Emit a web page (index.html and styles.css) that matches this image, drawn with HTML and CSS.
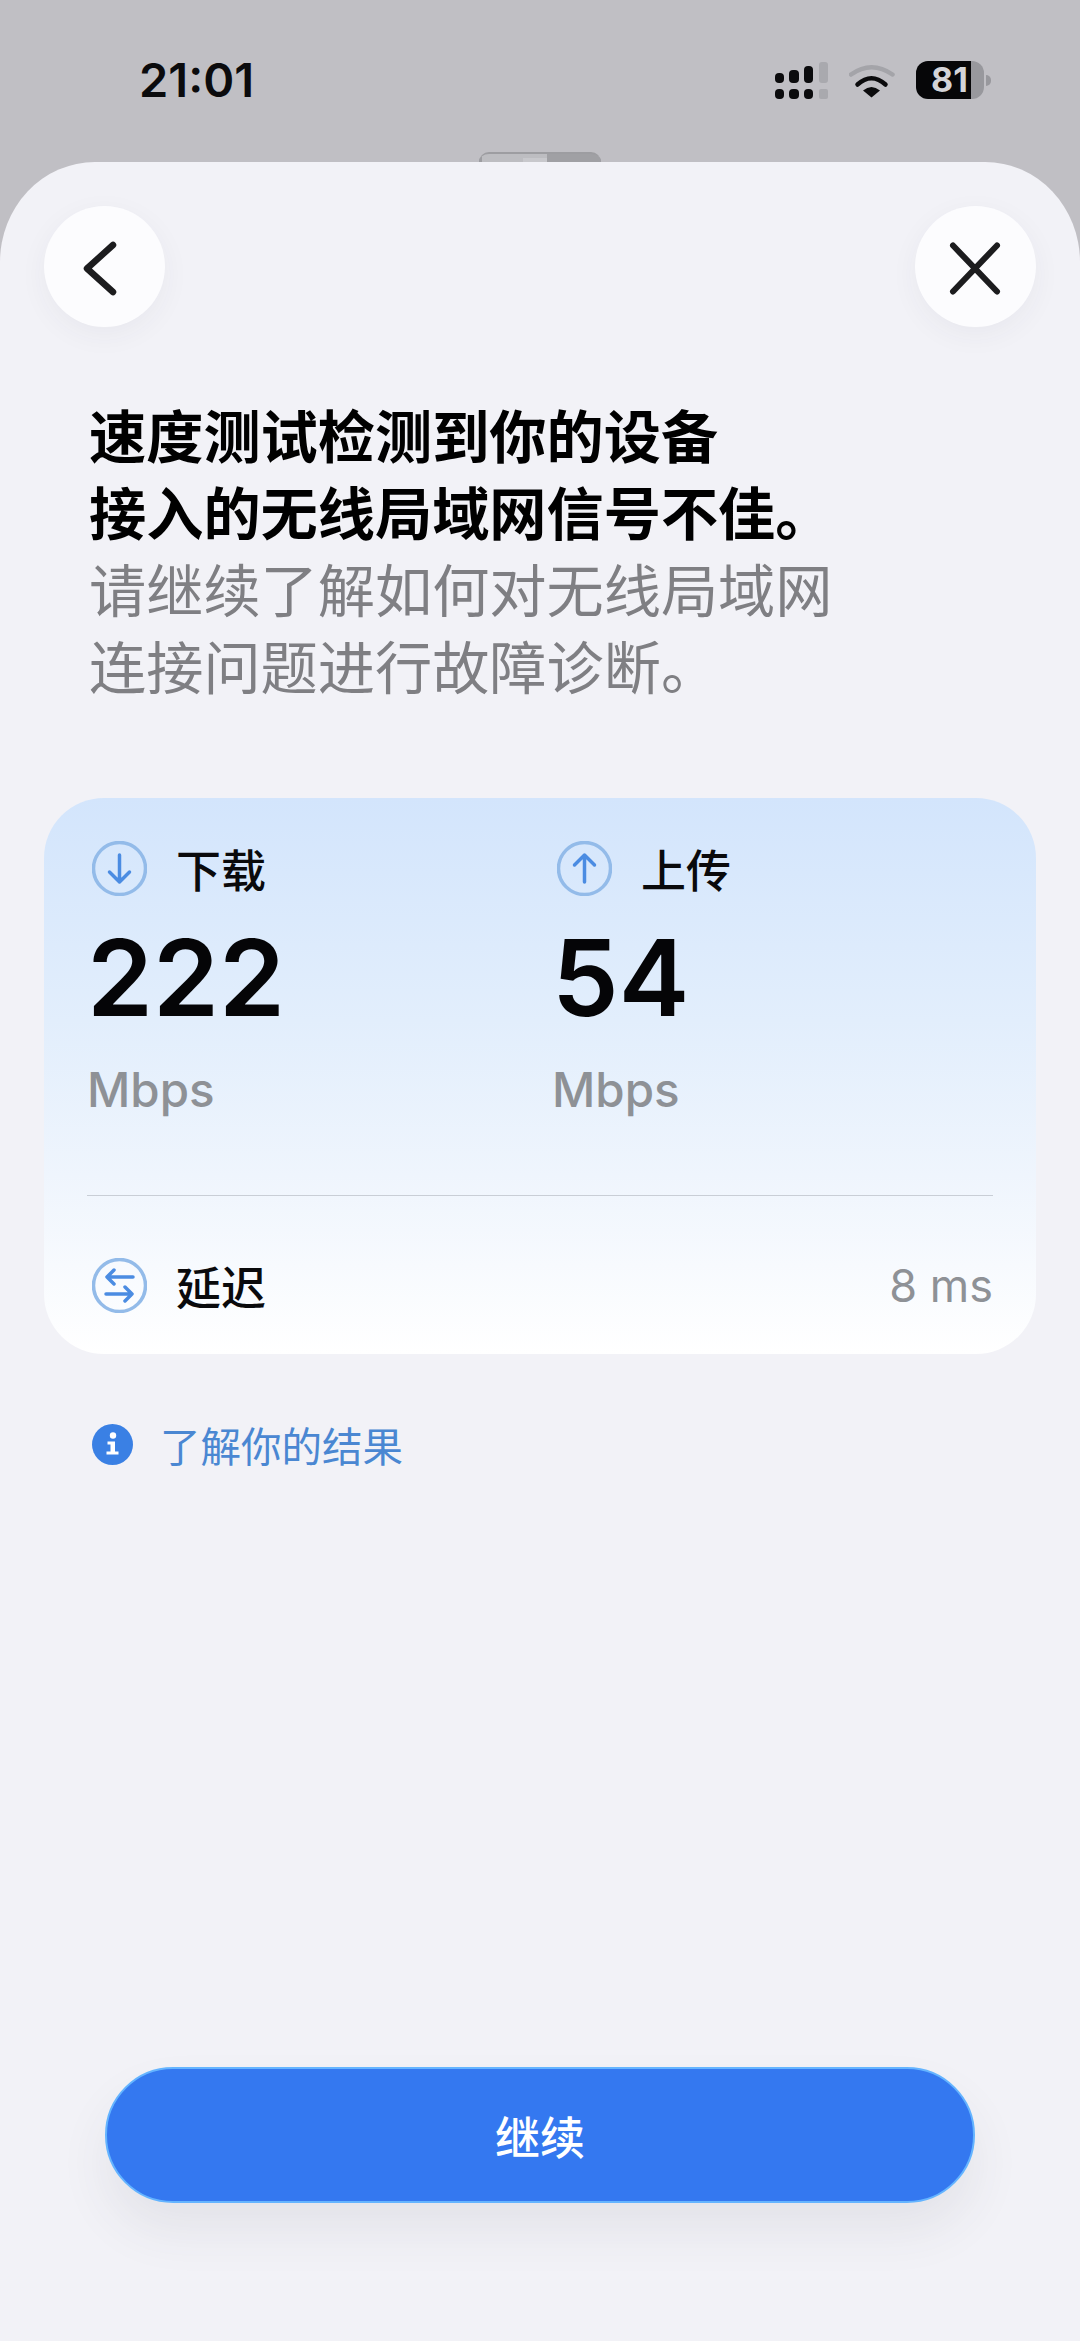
FILE: index.html
```html
<!DOCTYPE html>
<html lang="zh-CN">
<head>
<meta charset="utf-8">
<title>速度测试</title>
<link rel="stylesheet" href="styles.css">
</head>
<body>
<div class="screen">
  <header class="status">
    <span class="clock">21:01</span>
    <div class="status-icons">
      <svg class="signal" width="53" height="37" viewBox="0 0 53 37">
        <g fill="#0b0b0d">
          <rect x="0" y="11" width="9" height="10" rx="4"/>
          <rect x="14" y="8" width="10" height="13" rx="4"/>
          <rect x="29" y="4" width="9" height="17" rx="4"/>
          <rect x="0" y="27" width="9" height="10" rx="4"/>
          <rect x="14" y="27" width="10" height="10" rx="4"/>
          <rect x="29" y="27" width="9" height="10" rx="4"/>
        </g>
        <g fill="#a9a9ae">
          <rect x="44" y="0" width="9" height="21" rx="3"/>
          <rect x="44" y="27" width="9" height="10" rx="2"/>
        </g>
      </svg>
      <svg class="wifi" width="46" height="35" viewBox="0 0 46 35">
        <path d="M2 11.500Q22.500-3 43.500 11.500" fill="none" stroke="#a4a4a9" stroke-width="4.500" stroke-linecap="round"/>
        <path d="M8.500 21.500Q22.500 9 36.500 21.500" fill="none" stroke="#0b0b0d" stroke-width="4.500" stroke-linecap="round"/>
        <path d="M14 27.500Q22.500 20.500 31 27.500L22.500 34.500Z" fill="#0b0b0d"/>
      </svg>
      <div class="battery">
        <div class="battery-body"><span class="battery-level">81</span></div>
        <span class="battery-nub"></span>
      </div>
    </div>
    <span class="peek"></span>
  </header>

  <main class="sheet">
    <nav class="sheet-nav">
      <button class="round-btn" type="button" aria-label="返回">
        <svg width="120" height="120" viewBox="0 0 120 120"><path d="M69 38L43 61.500L69 85" fill="none" stroke="#1c1c1e" stroke-width="6.500" stroke-linecap="round" stroke-linejoin="round"/></svg>
      </button>
      <button class="round-btn" type="button" aria-label="关闭">
        <svg width="120" height="120" viewBox="0 0 120 120"><path d="M38 38.500L82 84.500M82 38.500L38 84.500" fill="none" stroke="#1c1c1e" stroke-width="6" stroke-linecap="round"/></svg>
      </button>
    </nav>

    <h1 class="headline">
      <span class="headline-strong">速度测试检测到你的设备<br>接入的无线局域网信号不佳。</span>
      <span class="headline-soft">请继续了解如何对无线局域网<br>连接问题进行故障诊断。</span>
    </h1>

    <section class="result-card">
      <div class="speeds">
        <div class="speed">
          <div class="metric-head">
            <svg class="metric-icon" viewBox="0 0 55 55"><circle cx="27.500" cy="27.500" r="26" class="ring"/><path d="M27.500 14V41M17.500 31L27.500 41L37.500 31" class="glyph"/></svg>
            <span class="metric-name">下载</span>
          </div>
          <div class="speed-value">222</div>
          <div class="speed-unit">Mbps</div>
        </div>
        <div class="speed">
          <div class="metric-head">
            <svg class="metric-icon" viewBox="0 0 55 55"><circle cx="27.500" cy="27.500" r="26" class="ring"/><path d="M27.500 41V14M17.500 24L27.500 14L37.500 24" class="glyph"/></svg>
            <span class="metric-name">上传</span>
          </div>
          <div class="speed-value">54</div>
          <div class="speed-unit">Mbps</div>
        </div>
      </div>
      <div class="latency">
        <div class="metric-head">
          <svg class="metric-icon" viewBox="0 0 55 55"><circle cx="27.500" cy="27.500" r="26" class="ring"/><path d="M41 19H15M22 12L15 19L22 26M14 36H40M33 29L40 36L33 43" class="glyph"/></svg>
          <span class="metric-name">延迟</span>
        </div>
        <span class="latency-value">8 ms</span>
      </div>
    </section>

    <a class="learn-link" href="#">
      <svg width="41" height="41" viewBox="0 0 41 41">
        <circle cx="20.500" cy="20.500" r="20.500" fill="#3a80e4"/>
        <circle cx="21" cy="11.500" r="3.200" fill="#fff"/>
        <path d="M15.500 17.500H23V27.500H26.500V30.500H14.500V27.500H18.500V20.500H15.500Z" fill="#fff"/>
      </svg>
      <span>了解你的结果</span>
    </a>

    <button class="continue" type="button">继续</button>
  </main>
</div>
</body>
</html>
```

FILE: styles.css
```css
* {
  box-sizing: border-box;
}

html,
body {
  margin: 0;
  padding: 0;
}

body {
  font-family: "Inter", "Noto Sans CJK SC", sans-serif;
  color: #000;
}

.screen {
  display: flex;
  flex-direction: column;
  width: 1080px;
  height: 2341px;
  overflow: hidden;
  background: #c0bfc4;
}

/* Status bar */
.status {
  position: relative;
  display: flex;
  flex: none;
  justify-content: space-between;
  align-items: flex-start;
  height: 162px;
  padding: 61px 89px 0 139px;
}

.clock {
  font-size: 47px;
  font-weight: 600;
  line-height: 38px;
  color: #0b0b0d;
}

.status-icons {
  display: flex;
  align-items: flex-start;
}

.signal {
  margin-top: 1px;
}

.wifi {
  margin: 2px 0 0 21px;
}

.battery {
  display: flex;
  align-items: center;
  margin-left: 21px;
}

.battery-body {
  width: 68px;
  height: 38px;
  border-radius: 12px;
  background: linear-gradient(90deg, #060608 81%, #98989d 81%);
}

.battery-level {
  display: block;
  width: 55px;
  padding-left: 15px;
  font-size: 34px;
  font-weight: 700;
  line-height: 38px;
  color: #d4d4d8;
}

.battery-nub {
  width: 5px;
  height: 11px;
  margin-left: 2px;
  border-radius: 0 5px 5px 0;
  background: #98989d;
}

.peek {
  position: absolute;
  left: 479px;
  top: 152px;
  width: 122px;
  height: 10px;
  border-top: 2px solid #9d9da1;
  border-radius: 12px 12px 0 0;
  background:
    linear-gradient(90deg, #9d9da1 0 3px, #bdbdc1 3px 36%, #c8c8cc 36% 56%, #a0a0a4 56%) bottom / 100% 4px no-repeat,
    linear-gradient(90deg, #9d9da1 0 3px, #bdbdc1 3px 56%, #a0a0a4 56%);
}

/* Sheet */
.sheet {
  display: flex;
  flex: 1;
  flex-direction: column;
  padding: 44px 44px 138px;
  border-radius: 95px 95px 0 0 / 100px 100px 0 0;
  background: #f2f2f7;
}

.sheet-nav {
  display: flex;
  justify-content: space-between;
}

.round-btn {
  width: 121px;
  height: 121px;
  padding: 0;
  border: 0;
  border-radius: 50%;
  background: #fcfcfe;
  box-shadow: 0 8px 28px rgba(60, 60, 80, 0.05);
}

.round-btn svg {
  display: block;
}

.headline {
  margin: 68px 0 0 45px;
  font-family: "Noto Sans CJK SC", sans-serif;
  font-size: 57.200px;
  font-weight: 400;
  line-height: 77px;
}

.headline-strong {
  display: block;
  font-weight: 700;
  color: #000;
}

.headline-soft {
  display: block;
  color: #7f7f83;
}

/* Results card */
.result-card {
  margin-top: 95px;
  padding: 43px 43px 41px;
  border-radius: 60px;
  background: linear-gradient(180deg, #d3e5fc 0%, #e2eefc 40%, #eff5fd 68%, #fff 100%);
}

.speeds {
  display: grid;
  grid-template-columns: 465px 1fr;
  padding-bottom: 75px;
  border-bottom: 1.500px solid #c9ced6;
}

.metric-head {
  display: flex;
  align-items: center;
  gap: 29px;
  padding-left: 5px;
}

.metric-icon {
  flex: none;
  width: 55px;
  height: 55px;
}

.ring {
  fill: none;
  stroke: #93bbe9;
  stroke-width: 3.500;
}

.glyph {
  fill: none;
  stroke: #4b8ce2;
  stroke-width: 3.500;
  stroke-linecap: round;
  stroke-linejoin: round;
}

.metric-name {
  font-family: "Noto Sans CJK SC", sans-serif;
  font-size: 45px;
  font-weight: 500;
  line-height: 55px;
  color: #0a0a0c;
}

.speed-value {
  margin-top: 32px;
  font-size: 106px;
  font-weight: 600;
  line-height: 100px;
  color: #050507;
}

.speed-unit {
  margin-top: 32px;
  font-size: 47.500px;
  font-weight: 500;
  line-height: 60px;
  color: #8e9196;
}

.latency {
  display: flex;
  justify-content: space-between;
  align-items: center;
  margin-top: 62px;
}

.latency-value {
  font-size: 45px;
  font-weight: 400;
  color: #8e9196;
}

/* Link and primary action */
.learn-link {
  display: flex;
  align-items: center;
  gap: 27px;
  margin: 70px 0 0 48px;
  font-family: "Noto Sans CJK SC", sans-serif;
  font-size: 40.500px;
  line-height: 41px;
  color: #4a87d2;
  text-decoration: none;
}

.continue {
  align-self: center;
  width: 870px;
  height: 136px;
  margin-top: auto;
  padding: 0;
  border: 2px solid #64b4ff;
  border-radius: 68px;
  background: #3478f0;
  box-shadow: 0 28px 50px rgba(60, 60, 80, 0.08);
  font-family: "Noto Sans CJK SC", sans-serif;
  font-size: 45px;
  font-weight: 500;
  color: #fff;
}
```
